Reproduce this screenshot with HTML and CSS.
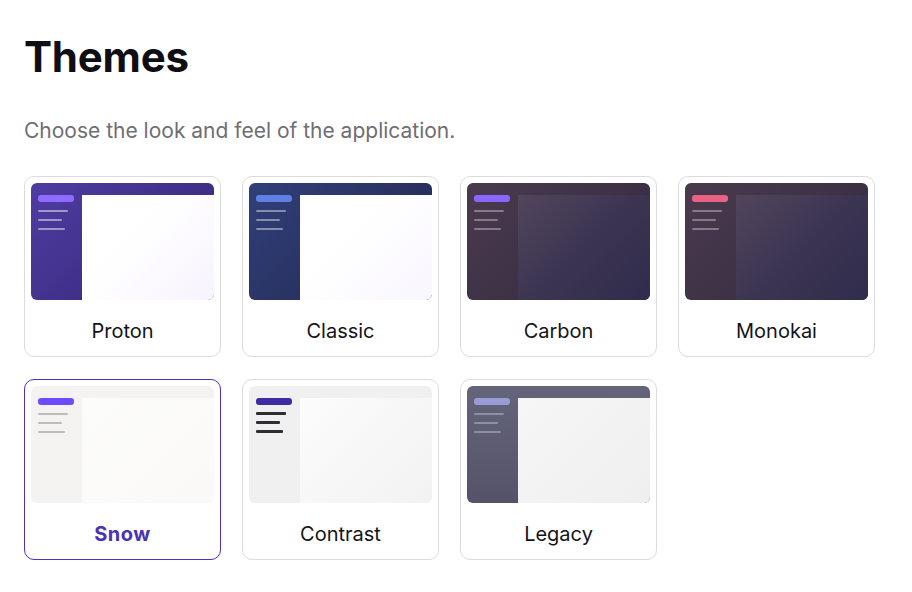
FILE: index.html
```html
<!DOCTYPE html>
<html lang="en">
<head>
<meta charset="utf-8">
<title>Themes</title>
<link rel="stylesheet" href="styles.css">
</head>
<body>
<main class="page">
  <h1 class="title">Themes</h1>
  <p class="subtitle">Choose the look and feel of the application.</p>
  <div class="grid">
    <button class="card">
      <div class="preview proton"><div class="side"><span class="pill"></span><span class="ln l1"></span><span class="ln l2"></span><span class="ln l3"></span></div><div class="panel"></div></div>
      <span class="label">Proton</span>
    </button>
    <button class="card">
      <div class="preview classic"><div class="side"><span class="pill"></span><span class="ln l1"></span><span class="ln l2"></span><span class="ln l3"></span></div><div class="panel"></div></div>
      <span class="label">Classic</span>
    </button>
    <button class="card">
      <div class="preview carbon"><div class="side"><span class="pill"></span><span class="ln l1"></span><span class="ln l2"></span><span class="ln l3"></span></div><div class="panel"></div></div>
      <span class="label">Carbon</span>
    </button>
    <button class="card">
      <div class="preview monokai"><div class="side"><span class="pill"></span><span class="ln l1"></span><span class="ln l2"></span><span class="ln l3"></span></div><div class="panel"></div></div>
      <span class="label">Monokai</span>
    </button>
    <button class="card selected">
      <div class="preview snow"><div class="side"><span class="pill"></span><span class="ln l1"></span><span class="ln l2"></span><span class="ln l3"></span></div><div class="panel"></div></div>
      <span class="label">Snow</span>
    </button>
    <button class="card">
      <div class="preview contrast"><div class="side"><span class="pill"></span><span class="ln l1"></span><span class="ln l2"></span><span class="ln l3"></span></div><div class="panel"></div></div>
      <span class="label">Contrast</span>
    </button>
    <button class="card">
      <div class="preview legacy"><div class="side"><span class="pill"></span><span class="ln l1"></span><span class="ln l2"></span><span class="ln l3"></span></div><div class="panel"></div></div>
      <span class="label">Legacy</span>
    </button>
  </div>
</main>
</body>
</html>
```
FILE: styles.css
```css
* { box-sizing: border-box; }
html, body { margin: 0; padding: 0; background: #ffffff; }
body { font-family: Inter, "Noto Sans", "Liberation Sans", sans-serif; color: #17171c; }

.page { padding: 33px 24px 24px; }

.title {
  margin: 0;
  font-size: 42px;
  line-height: 48px;
  font-weight: 700;
  color: #0e0e14;
  letter-spacing: -0.2px;
}

.subtitle {
  margin: 36px 0 0;
  font-size: 21px;
  line-height: 28px;
  color: #6f6e73;
}

.grid {
  margin-top: 31px;
  display: grid;
  grid-template-columns: repeat(4, 197px);
  column-gap: 21px;
  row-gap: 22px;
}

.card {
  display: flex;
  flex-direction: column;
  align-items: stretch;
  padding: 6px 6px 0;
  height: 181px;
  border: 1px solid #dcdbdd;
  border-radius: 10px;
  background: #fff;
  font: inherit;
  cursor: pointer;
}
.card.selected { border-color: #4a33c0; }

.label {
  display: block;
  padding-top: 19px;
  font-size: 20px;
  line-height: 24px;
  color: #141418;
  text-align: center;
}
.card.selected .label { color: #4a33b5; font-weight: 700; letter-spacing: 0.5px; }

.preview {
  display: flex;
  height: 117px;
  border-radius: 6px;
  overflow: hidden;
}
.side {
  width: 51px;
  flex: none;
  display: flex;
  flex-direction: column;
  align-items: flex-start;
  padding: 12px 0 0 7px;
}
.pill { display: block; width: 36px; height: 7px; border-radius: 3px; }
.ln { display: block; height: 2.5px; border-radius: 1px; margin-top: 6.5px; }
.pill + .ln { margin-top: 7.5px; }
.l1 { width: 30px; }
.l2 { width: 24px; }
.l3 { width: 27px; }
.panel { flex: 1; margin-top: 12px; }

/* Proton */
.proton { background: linear-gradient(135deg, #4f3ca2 0%, #3f2f86 60%, #3a2b7a 100%); }
.proton .pill { background: #8d6cff; }
.proton .ln { background: rgba(255,255,255,0.48); }
.proton .panel { background: linear-gradient(135deg, #ffffff 35%, #f8f3ff 100%); }

/* Classic */
.classic { background: linear-gradient(135deg, #31407a 0%, #28305f 60%, #232a50 100%); }
.classic .pill { background: #5f7fe4; }
.classic .ln { background: rgba(255,255,255,0.42); }
.classic .panel { background: linear-gradient(135deg, #ffffff 35%, #f9f6ff 100%); }

/* Carbon */
.carbon { background: linear-gradient(135deg, #4a3a4e 0%, #3f3246 50%, #2b2740 100%); }
.carbon .pill { background: #8a66ff; }
.carbon .ln { background: rgba(255,255,255,0.34); }
.carbon .panel { background: linear-gradient(135deg, #51455c 0%, #3c3552 50%, #302c4c 100%); }

/* Monokai */
.monokai { background: linear-gradient(135deg, #4a3a4e 0%, #3f3246 50%, #2b2740 100%); }
.monokai .pill { background: #ea6283; }
.monokai .ln { background: rgba(255,255,255,0.34); }
.monokai .panel { background: linear-gradient(135deg, #51455c 0%, #3c3552 50%, #302c4c 100%); }

/* Snow */
.snow { background: #f4f3f2; }
.snow .pill { background: #6d4bff; }
.snow .ln { background: #bebcba; }
.snow .panel { background: linear-gradient(135deg, #fcfcfb 0%, #faf9f7 100%); }

/* Contrast */
.contrast { background: #f0f0f0; }
.contrast .pill { background: #3f2ca3; }
.contrast .ln { background: #2f2f33; height: 3px; margin-top: 6px; }
.contrast .pill + .ln { margin-top: 7px; }
.contrast .panel { background: linear-gradient(135deg, #fcfcfc 0%, #f2f2f2 100%); }

/* Legacy */
.legacy { background: linear-gradient(180deg, #64647a 0%, #545369 100%); }
.legacy .pill { background: #9b9cd7; }
.legacy .ln { background: #8f8fa2; }
.legacy .panel { background: linear-gradient(135deg, #f6f6f6 0%, #efefef 100%); }
```
